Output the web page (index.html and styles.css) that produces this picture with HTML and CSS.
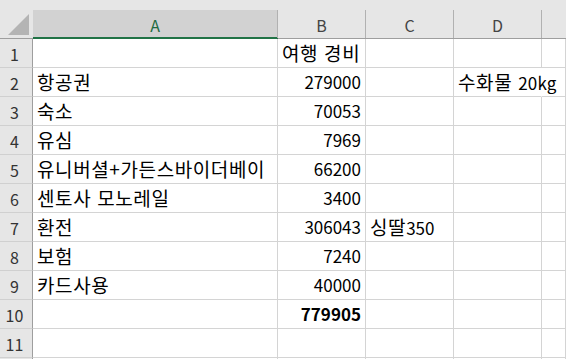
FILE: index.html
```html
<!DOCTYPE html>
<html lang="ko">
<head>
<meta charset="utf-8">
<link rel="stylesheet" href="styles.css">
</head>
<body>
<div class="sheet">
  <div class="corner"><span class="tri"></span></div>
  <div class="ch sel"><span class="lab">A</span></div>
  <div class="ch"><span class="lab">B</span></div>
  <div class="ch"><span class="lab">C</span></div>
  <div class="ch"><span class="lab">D</span></div>
  <div class="ch last"><span class="lab"></span></div>

  <div class="rh">1</div><div class="c"></div><div class="c"><span class="k">여행 경비</span></div><div class="c"></div><div class="c"></div><div class="c"></div>
  <div class="rh">2</div><div class="c"><span class="k">항공권</span></div><div class="c n">279000</div><div class="c"></div><div class="c spill"><span class="k">수화물 </span><span class="lat">20kg</span></div><div class="c"></div>
  <div class="rh">3</div><div class="c"><span class="k">숙소</span></div><div class="c n">70053</div><div class="c"></div><div class="c"></div><div class="c"></div>
  <div class="rh">4</div><div class="c"><span class="k">유심</span></div><div class="c n">7969</div><div class="c"></div><div class="c"></div><div class="c"></div>
  <div class="rh">5</div><div class="c"><span class="k">유니버셜+가든스바이더베이</span></div><div class="c n">66200</div><div class="c"></div><div class="c"></div><div class="c"></div>
  <div class="rh">6</div><div class="c"><span class="k">센토사 모노레일</span></div><div class="c n">3400</div><div class="c"></div><div class="c"></div><div class="c"></div>
  <div class="rh">7</div><div class="c"><span class="k">환전</span></div><div class="c n">306043</div><div class="c"><span class="k">싱딸</span>350</div><div class="c"></div><div class="c"></div>
  <div class="rh">8</div><div class="c"><span class="k">보험</span></div><div class="c n">7240</div><div class="c"></div><div class="c"></div><div class="c"></div>
  <div class="rh">9</div><div class="c"><span class="k">카드사용</span></div><div class="c n">40000</div><div class="c"></div><div class="c"></div><div class="c"></div>
  <div class="rh">10</div><div class="c"></div><div class="c n b">779905</div><div class="c"></div><div class="c"></div><div class="c"></div>
  <div class="rh">11</div><div class="c"></div><div class="c"></div><div class="c"></div><div class="c"></div><div class="c"></div>
  <div class="rh"></div><div class="c"></div><div class="c"></div><div class="c"></div><div class="c"></div><div class="c"></div>
</div>
</body>
</html>
```

FILE: styles.css
```css
html, body {
  margin: 0;
  padding: 0;
  overflow: hidden;
  background: #ffffff;
}
.sheet {
  display: grid;
  grid-template-columns: 33px 245px 88px 88px 88px 24px;
  grid-template-rows: 39px repeat(12, 29px);
  font-family: "Noto Sans CJK KR", sans-serif;
  font-size: 17px;
  color: #000;
  width: 566px;
}
.sheet > div {
  box-sizing: border-box;
}
.corner {
  background: #e6e6e6;
  border-bottom: 1px solid #9e9e9e;
  position: relative;
}
.tri {
  position: absolute;
  left: 8px;
  top: 14px;
  width: 21px;
  height: 21px;
  background: #b4b4b4;
  clip-path: polygon(100% 0, 100% 100%, 0 100%);
}
.ch {
  background: #e6e6e6;
  border-bottom: 1px solid #9e9e9e;
  padding-top: 10px;
  display: flex;
}
.ch .lab {
  flex: 1;
  box-sizing: border-box;
  height: 28px;
  border-right: 1px solid #b1b1b1;
  display: flex;
  align-items: center;
  justify-content: center;
  font-size: 16px;
  color: #444;
  padding-top: 1px;
}
.ch.last .lab {
  border-right: none;
}
.ch.sel {
  border-bottom-color: #217346;
}
.ch.sel .lab {
  background: #d2d2d2;
  color: #1e6b41;
  box-shadow: inset 0 -1px 0 #217346;
}
.rh {
  background: #e6e6e6;
  border-right: 1px solid #9e9e9e;
  border-bottom: 1px solid #d0d0d0;
  display: flex;
  align-items: center;
  justify-content: center;
  font-size: 16px;
  color: #333;
  padding-right: 3px;
  padding-top: 2px;
}
.c {
  border-right: 1px solid #d4d4d4;
  border-bottom: 1px solid #d4d4d4;
  display: flex;
  align-items: baseline;
  padding: 0 4px 0 4px;
  line-height: 24px;
  white-space: pre;
  overflow: visible;
  padding-top: 2px;
}
.c .k {
  font-size: 19px;
  letter-spacing: 0.6px;
}
.c .lat {
  letter-spacing: 0.2px;
}
.c.n {
  justify-content: flex-end;
}
.c.b {
  font-weight: bold;
}
.c.spill {
  border-right-color: #ffffff;
}
```
